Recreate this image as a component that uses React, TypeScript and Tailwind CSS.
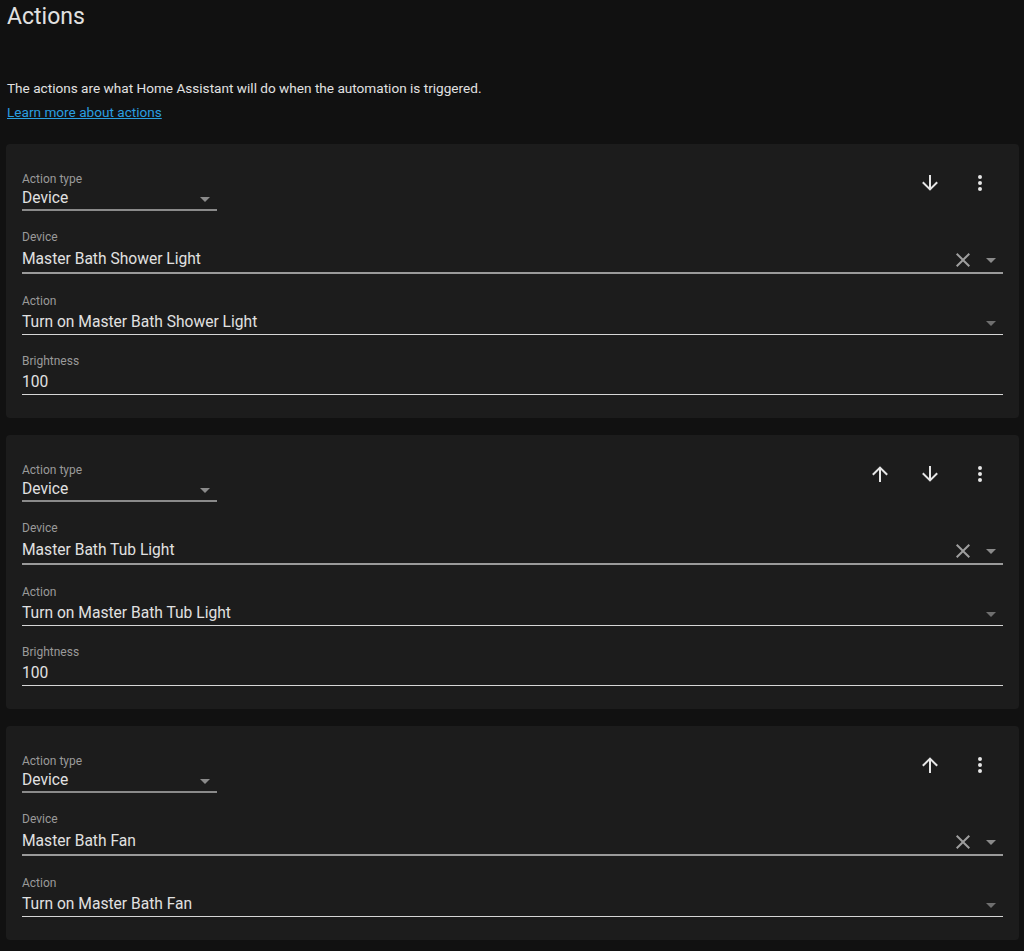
import React from "react";

const P = {
  down: "M11,4H13V16L18.5,10.5L19.92,11.92L12,19.84L4.08,11.92L5.5,10.5L11,16V4Z",
  up: "M13,20H11V8L5.5,13.5L4.08,12.08L12,4.16L19.92,12.08L18.5,13.5L13,8V20Z",
  dots: "M12,16A2,2 0 0,1 14,18A2,2 0 0,1 12,20A2,2 0 0,1 10,18A2,2 0 0,1 12,16M12,10A2,2 0 0,1 14,12A2,2 0 0,1 12,14A2,2 0 0,1 10,12A2,2 0 0,1 12,10M12,4A2,2 0 0,1 14,6A2,2 0 0,1 12,8A2,2 0 0,1 10,6A2,2 0 0,1 12,4Z",
  close: "M19,6.41L17.59,5L12,10.59L6.41,5L5,6.41L10.59,12L5,17.59L6.41,19L12,13.41L17.59,19L19,17.59L13.41,12L19,6.41Z",
  menu: "M7,10L12,15L17,10H7Z",
};

function Icon({ d, className }: { d: string; className?: string }) {
  return (
    <svg viewBox="0 0 24 24" className={className} fill="currentColor">
      <path d={d} />
    </svg>
  );
}

function Label({ children }: { children: React.ReactNode }) {
  return <div className="text-[12px] leading-[16px] h-[16px] text-[#9a9a9a]">{children}</div>;
}

function ActionType() {
  return (
    <div className="w-[195px]">
      <Label>Action type</Label>
      <div className="h-[22px] pt-[2px] flex items-center justify-between">
        <span className="text-[15.6px] text-[#e1e1e1]">Device</span>
        <Icon d={P.menu} className="w-[24px] h-[24px] text-[#8a8a8a]" />
      </div>
      <div className="h-[2px] bg-[#8a8a8a]" />
    </div>
  );
}

function DeviceField({ value }: { value: string }) {
  return (
    <div className="mt-[18px]">
      <Label>Device</Label>
      <div className="h-[27px] pt-[2px] flex items-center justify-between">
        <span className="text-[15.6px] text-[#e1e1e1]">{value}</span>
        <div className="flex items-center gap-[4px]">
          <Icon d={P.close} className="w-[24px] h-[24px] text-[#9e9e9e]" />
          <Icon d={P.menu} className="w-[24px] h-[24px] text-[#8a8a8a]" />
        </div>
      </div>
      <div className="h-[2px] bg-[#9a9a9a]" />
    </div>
  );
}

function ActionField({ value }: { value: string }) {
  return (
    <div className="mt-[19px]">
      <Label>Action</Label>
      <div className="h-[25px] pt-[2px] flex items-center justify-between">
        <span className="text-[15.6px] text-[#e1e1e1]">{value}</span>
        <Icon d={P.menu} className="w-[24px] h-[24px] text-[#6f6f6f]" />
      </div>
      <div className="h-[1px] bg-[#d6d6d6]" />
    </div>
  );
}

function BrightnessField() {
  return (
    <div className="mt-[18px]">
      <Label>Brightness</Label>
      <div className="h-[25px] pt-[2px] flex items-center">
        <span className="text-[15.6px] text-[#e1e1e1]">100</span>
      </div>
      <div className="h-[1px] bg-[#d6d6d6]" />
    </div>
  );
}

function Card({
  device,
  action,
  up,
  down,
  brightness,
}: {
  device: string;
  action: string;
  up?: boolean;
  down?: boolean;
  brightness?: boolean;
}) {
  return (
    <div className="rounded-[4px] bg-[#1c1c1c] px-[16px] pt-[27px] pb-[23px]">
      <div className="flex items-start justify-between">
        <ActionType />
        <div className="flex items-center -mr-[2px]">
          {up && (
            <div className="w-[50px] h-[24px] flex items-center justify-center">
              <Icon d={P.up} className="w-[24px] h-[24px] text-[#e6e6e6]" />
            </div>
          )}
          {down && (
            <div className="w-[50px] h-[24px] flex items-center justify-center">
              <Icon d={P.down} className="w-[24px] h-[24px] text-[#e6e6e6]" />
            </div>
          )}
          <div className="w-[50px] h-[24px] flex items-center justify-center">
            <Icon d={P.dots} className="w-[24px] h-[24px] text-[#e6e6e6]" />
          </div>
        </div>
      </div>
      <DeviceField value={device} />
      <ActionField value={action} />
      {brightness && <BrightnessField />}
    </div>
  );
}

export default function App() {
  return (
    <div
      className="min-h-[951px] bg-[#111111] pl-[6px] pr-[5px] pt-[1px] pb-[20px]"
      style={{ fontFamily: "Roboto, 'Noto Sans', sans-serif" }}
    >
      <h1 className="pl-[1px] text-[23px] leading-[32px] text-[#e1e1e1] font-normal">Actions</h1>
      <p className="pl-[1px] mt-[43px] text-[13.6px] leading-[24px] text-[#e1e1e1]">
        The actions are what Home Assistant will do when the automation is triggered.
      </p>
      <a className="pl-[1px] block text-[13.6px] leading-[24px] text-[#2a9fe0] underline">
        Learn more about actions
      </a>
      <div className="mt-[20px] flex flex-col gap-[17px]">
        <Card
          device="Master Bath Shower Light"
          action="Turn on Master Bath Shower Light"
          down
          brightness
        />
        <Card
          device="Master Bath Tub Light"
          action="Turn on Master Bath Tub Light"
          up
          down
          brightness
        />
        <Card device="Master Bath Fan" action="Turn on Master Bath Fan" up />
      </div>
    </div>
  );
}
